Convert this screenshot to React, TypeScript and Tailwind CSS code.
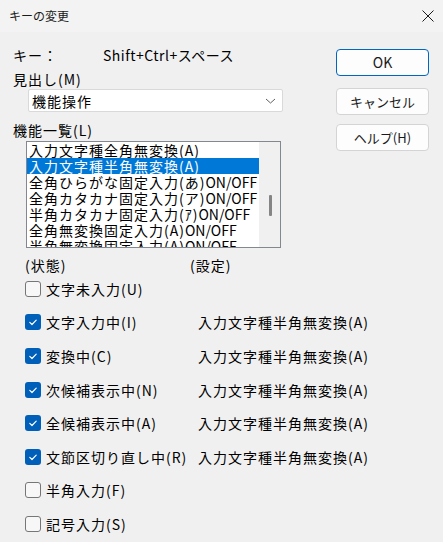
import React from 'react';

const font = { fontFamily: '"Noto Sans CJK JP", "Noto Sans", sans-serif' };

const listItems = [
  "入力文字種全角無変換(A)",
  "入力文字種半角無変換(A)",
  "全角ひらがな固定入力(あ)ON/OFF",
  "全角カタカナ固定入力(ア)ON/OFF",
  "半角カタカナ固定入力(ｱ)ON/OFF",
  "全角無変換固定入力(A)ON/OFF",
  "半角無変換固定入力(A)ON/OFF",
];

const states = [
  { label: "文字未入力(U)", checked: false, setting: "" },
  { label: "文字入力中(I)", checked: true, setting: "入力文字種半角無変換(A)" },
  { label: "変換中(C)", checked: true, setting: "入力文字種半角無変換(A)" },
  { label: "次候補表示中(N)", checked: true, setting: "入力文字種半角無変換(A)" },
  { label: "全候補表示中(A)", checked: true, setting: "入力文字種半角無変換(A)" },
  { label: "文節区切り直し中(R)", checked: true, setting: "入力文字種半角無変換(A)" },
  { label: "半角入力(F)", checked: false, setting: "" },
  { label: "記号入力(S)", checked: false, setting: "" },
];

function Checkbox({ checked }: { checked: boolean }) {
  if (checked) {
    return (
      <div className="w-[16px] h-[16px] rounded-[3px] bg-[#005fb8] flex items-center justify-center shrink-0">
        <svg width="16" height="16" viewBox="0 0 16 16" fill="none" stroke="white" strokeWidth="1.2" strokeLinecap="round" strokeLinejoin="round">
          <path d="M4.8 8.4l2.2 2.1 4.2-4.4" />
        </svg>
      </div>
    );
  }
  return <div className="w-[16px] h-[16px] rounded-[3px] border border-[#767676] bg-[#f7f7f7] shrink-0" />;
}

function Button({ children, primary }: { children: React.ReactNode; primary?: boolean }) {
  return (
    <div
      className={`w-[93px] h-[27px] rounded-[4px] bg-[#fdfdfd] flex items-center justify-center text-[13px] text-[#1a1a1a] ${
        primary ? 'border border-[#0067c0] text-[14px]' : 'border border-[#d4d4d4]'
      }`}
    >
      {children}
    </div>
  );
}

function ListText({ text }: { text: string }) {
  // ON/OFF is narrower in the original, keep it without extra tracking
  if (!text.endsWith("ON/OFF")) return <>{text}</>;
  return (
    <>
      {text.slice(0, -6)}
      <span className="tracking-[0px]">ON/OFF</span>
    </>
  );
}

export default function App() {
  return (
    <div className="w-[443px] h-[542px] bg-[#f0f0f0] overflow-hidden text-[#000] select-none" style={font}>
      {/* Title bar */}
      <div className="h-[32px] bg-[#f3f3f3] flex items-center justify-between pl-[9px] pr-[8px]">
        <span className="text-[12px] text-[#1a1a1a]">キーの変更</span>
        <svg width="14" height="14" viewBox="0 0 14 14" fill="none" stroke="#1a1a1a" strokeWidth="1">
          <path d="M1.5 1.5l11 11M12.5 1.5l-11 11" />
        </svg>
      </div>

      <div className="flex">
        {/* Left column */}
        <div className="w-[336px] shrink-0 pl-[13px] text-[14px] tracking-[1px] leading-[16px]">
          <div className="mt-[15px] flex">
            <span className="w-[90px]">キー：</span>
            <span className="tracking-[0.5px]">Shift+Ctrl+スペース</span>
          </div>
          <div className="mt-[8px]">見出し(M)</div>
          <div className="mt-[2px] ml-[15px] w-[255px] h-[23px] bg-white border border-[#d9d9d9] rounded-[2px] flex items-center justify-between pl-[3px] pr-[6px]">
            <span>機能操作</span>
            <svg width="11" height="6" viewBox="0 0 11 6" fill="none" stroke="#606060" strokeWidth="1">
              <path d="M1 1l4.5 4 4.5-4" />
            </svg>
          </div>
          <div className="mt-[10px]">機能一覧(L)</div>
          <div className="mt-[3px] ml-[13px] w-[255px] h-[107px] bg-white border border-[#828790] flex overflow-hidden">
            <div className="flex-1 min-w-0 flex flex-col">
              {listItems.map((item, i) => (
                <div
                  key={i}
                  className={`h-[16px] shrink-0 pl-[2px] whitespace-nowrap ${i === 1 ? 'bg-[#0078d7] text-white' : ''}`}
                >
                  <ListText text={item} />
                </div>
              ))}
            </div>
            <div className="w-[21px] shrink-0 bg-[#f0f0f0] flex justify-center pt-[53px] pl-[1px]">
              <div className="w-[3px] h-[21px] bg-[#858585] rounded-[1px]" />
            </div>
          </div>

          <div className="mt-[9px] ml-[12px] flex h-[16px]">
            <span className="w-[165px] shrink-0">(状態)</span>
            <span>(設定)</span>
          </div>
          <div className="flex flex-col -mt-[1px]">
            {states.map((s, i) => (
              <div key={i} className="h-[33.6px] flex items-center ml-[12px]">
                <Checkbox checked={s.checked} />
                <span className="ml-[5px] w-[152px] shrink-0 whitespace-nowrap">{s.label}</span>
                <span className="shrink-0 whitespace-nowrap">{s.setting}</span>
              </div>
            ))}
          </div>
        </div>

        {/* Right column */}
        <div className="flex flex-col">
          <div className="mt-[17px]">
            <Button primary>OK</Button>
          </div>
          <div className="mt-[12px]">
            <Button>キャンセル</Button>
          </div>
          <div className="mt-[9px]">
            <Button>ヘルプ(H)</Button>
          </div>
        </div>
      </div>
    </div>
  );
}
